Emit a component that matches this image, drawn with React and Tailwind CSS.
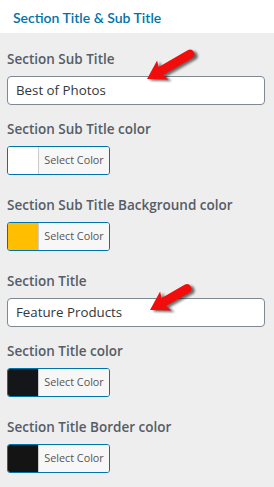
import React from 'react';

const font = { fontFamily: '"Open Sans", "Noto Sans", Arial, sans-serif' };

function Arrow({ x, y, len }) {
  // tip at (x, y), tail goes up and to the right
  const d = `M0 0 L18 -11 L16 -4.5 L${len - 4.5} -4.5 Q${len} -4.5 ${len} 0 Q${len} 4.5 ${len - 4.5} 4.5 L16 4.5 L18 11 Z`;
  return (
    <g transform={`translate(${x} ${y}) rotate(-30)`}>
      <g transform="translate(2 3)" opacity="0.6" filter="url(#blur)">
        <path d={d} fill="#111" />
      </g>
      <path d={d} fill="#f20d0d" />
    </g>
  );
}

function TextField({ label, value }) {
  return (
    <div className="mb-[14px]">
      <div className="text-[13.5px] leading-5 font-semibold text-[#555d66] mb-[7px]">{label}</div>
      <div className="h-[29px] bg-white border border-[#7e8993] rounded-[4px] flex items-center pl-[8px] text-[13.3px] text-[#32373c]">
        {value}
      </div>
    </div>
  );
}

function ColorField({ label, color }) {
  return (
    <div className="mb-[20px]">
      <div className="text-[13.5px] leading-5 font-semibold text-[#555d66] mb-[7px]">{label}</div>
      <div className="w-[103px] h-[29px] flex border border-[#0073aa] rounded-[3px] overflow-hidden">
        <div className="w-[31px] h-full border-r border-[#ccc]" style={{ backgroundColor: color }}></div>
        <div className="flex-1 bg-[#f7f7f7] flex items-center justify-center text-[10.8px] text-[#555]">Select Color</div>
      </div>
    </div>
  );
}

export default function App() {
  return (
    <div className="relative w-[274px] h-[487px] bg-[#eeeeee] overflow-hidden" style={font}>
      <div className="h-[33px] bg-white flex items-center pl-[13px] pt-[1px]">
        <span className="text-[14px] font-semibold text-[#0073aa]" style={{ fontFamily: 'Lato, "Open Sans", sans-serif' }}>
          Section Title &amp; Sub Title
        </span>
      </div>
      <div className="pt-[16px] pl-[7px] pr-[9px]">
        <TextField label="Section Sub Title" value="Best of Photos" />
        <ColorField label="Section Sub Title color" color="#ffffff" />
        <ColorField label="Section Sub Title Background color" color="#ffbf00" />
        <TextField label="Section Title" value="Feature Products" />
        <ColorField label="Section Title color" color="#141619" />
        <ColorField label="Section Title Border color" color="#141414" />
      </div>
      <svg className="absolute inset-0 pointer-events-none" width="274" height="487">
        <defs>
          <filter id="blur" x="-20%" y="-50%" width="140%" height="200%">
            <feGaussianBlur stdDeviation="1.2" />
          </filter>
        </defs>
        <Arrow x={147} y={79} len={54} />
        <Arrow x={150} y={310} len={47} />
      </svg>
    </div>
  );
}
